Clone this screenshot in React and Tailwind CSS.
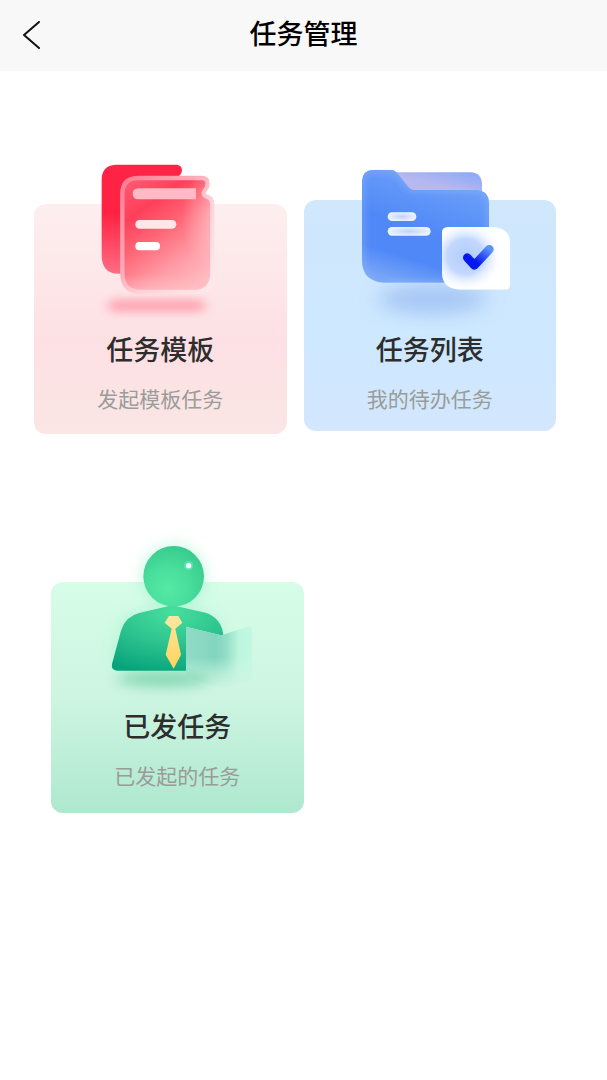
import React from "react";

function TemplateIcon() {
  return (
    <svg viewBox="0 0 450 540" className="block h-[180px] w-[150px]" aria-hidden="true">
      <defs>
        <linearGradient id="tplBack" x1="0" y1="0" x2="0" y2="1">
          <stop offset="0" stopColor="#ff2346" />
          <stop offset="0.45" stopColor="#ff2343" />
          <stop offset="1" stopColor="#ff6d85" />
        </linearGradient>
        <linearGradient id="tplFront" x1="0.2" y1="0" x2="0.75" y2="1">
          <stop offset="0" stopColor="#ff5570" />
          <stop offset="0.22" stopColor="#ff3f5a" />
          <stop offset="0.45" stopColor="#ff6475" />
          <stop offset="0.75" stopColor="#ff9ca6" />
          <stop offset="1" stopColor="#ffbdc3" />
        </linearGradient>
        <linearGradient id="tplEdge" x1="0" y1="0" x2="1" y2="1">
          <stop offset="0" stopColor="#ff7c92" />
          <stop offset="0.4" stopColor="#ffabb8" />
          <stop offset="0.6" stopColor="#ffd3d9" />
          <stop offset="1" stopColor="#ffeaec" />
        </linearGradient>
        <radialGradient id="tplFade">
          <stop offset="0" stopColor="#ffc3c8" stopOpacity="0.9" />
          <stop offset="1" stopColor="#ffc3c8" stopOpacity="0" />
        </radialGradient>
        <filter id="tplBlur" x="-30%" y="-150%" width="160%" height="400%">
          <feGaussianBlur stdDeviation="18 13" />
        </filter>
        <clipPath id="tplClip">
          <path d="M160 84H350Q368 84 368 102Q368 112 359 122Q352 132 362 139Q382 142 382 164V368Q382 426 326 426H170Q112 426 112 368V132Q112 84 160 84Z" />
        </clipPath>
      </defs>
      <rect x="70" y="448" width="290" height="38" rx="19" fill="#ff9bab" opacity="0.85" filter="url(#tplBlur)" />
      <path d="M92 44H276Q291 46 291 62Q288 76 276 82V371H100Q50 371 50 314V90Q50 46 92 44Z" fill="url(#tplBack)" />
      <path d="M160 84H350Q368 84 368 102Q368 112 359 122Q352 132 362 139Q382 142 382 164V368Q382 426 326 426H170Q112 426 112 368V132Q112 84 160 84Z" fill="url(#tplFront)" />
      <g clipPath="url(#tplClip)">
        <ellipse cx="410" cy="210" rx="120" ry="180" fill="url(#tplFade)" />
        <ellipse cx="200" cy="465" rx="220" ry="95" fill="url(#tplFade)" />
      </g>
      <path d="M160 84H350Q368 84 368 102Q368 112 359 122Q352 132 362 139Q382 142 382 164V368Q382 426 326 426H170Q112 426 112 368V132Q112 84 160 84Z" fill="none" stroke="url(#tplEdge)" strokeWidth="13" />
      <path d="M160 115H333V148H160Q143 147 143 131Q143 116 160 115Z" fill="#ffbac6" />
      <rect x="151" y="210" width="123" height="26" rx="13" fill="#ffe6e9" />
      <rect x="151" y="276" width="74" height="25" rx="12" fill="#fff" />
    </svg>
  );
}

function FolderIcon() {
  return (
    <svg viewBox="-30 -15 570 540" className="block h-[180px] w-[190px]" aria-hidden="true">
      <defs>
        <linearGradient id="folderBody" x1="0.7" y1="0" x2="0.35" y2="1">
          <stop offset="0" stopColor="#72a4fa" />
          <stop offset="0.55" stopColor="#5089f7" />
          <stop offset="0.8" stopColor="#5089f7" />
          <stop offset="1" stopColor="#76a3f8" />
        </linearGradient>
        <linearGradient id="folderBack" x1="0" y1="1" x2="1" y2="0">
          <stop offset="0" stopColor="#c4bdec" />
          <stop offset="0.5" stopColor="#b3b7f2" />
          <stop offset="1" stopColor="#86a8f5" />
        </linearGradient>
        <linearGradient id="folderTick" x1="0" y1="1" x2="1" y2="0">
          <stop offset="0.3" stopColor="#0517ec" />
          <stop offset="1" stopColor="#5b93fa" />
        </linearGradient>
        <radialGradient id="folderLine">
          <stop offset="0" stopColor="#bdd3fc" />
          <stop offset="1" stopColor="#eaf3ff" />
        </radialGradient>
        <radialGradient id="folderGlass">
          <stop offset="0" stopColor="#b3ccfd" />
          <stop offset="0.5" stopColor="#c3d8fe" />
          <stop offset="1" stopColor="#fff" stopOpacity="0" />
        </radialGradient>
        <filter id="folderBlur" x="-40%" y="-150%" width="180%" height="400%">
          <feGaussianBlur stdDeviation="28" />
        </filter>
        <filter id="folderEdgeBlur" x="-20%" y="-20%" width="140%" height="140%">
          <feGaussianBlur stdDeviation="10" />
        </filter>
        <clipPath id="folderClip">
          <path d="M82 44H135Q150 44 159 57L188 94Q196 105 208 105H395Q432 108 432 145V383H112Q51 376 51 315V77Q53 46 82 44Z" />
        </clipPath>
        <clipPath id="folderNote">
          <path d="M308 216H448Q496 222 496 265V388Q496 404 480 404H342Q292 400 291 354V232Q291 217 308 216Z" />
        </clipPath>
      </defs>
      <ellipse cx="262" cy="432" rx="165" ry="44" fill="#9bbdf3" opacity="0.8" filter="url(#folderBlur)" />
      <path d="M140 52H377Q410 54 411 88V120H180Z" fill="url(#folderBack)" />
      <g clipPath="url(#folderClip)">
        <rect x="50" y="40" width="384" height="345" fill="url(#folderBody)" />
        <path d="M82 44H135Q150 44 159 57L188 94Q196 105 208 105H395Q432 108 432 145V383H112Q51 376 51 315V77Q53 46 82 44Z" fill="none" stroke="#93b9fb" strokeWidth="14" opacity="0.5" filter="url(#folderEdgeBlur)" />
      </g>
      <rect x="128" y="172" width="86" height="26" rx="13" fill="url(#folderLine)" />
      <rect x="128" y="216" width="129" height="26" rx="13" fill="url(#folderLine)" />
      <g clipPath="url(#folderNote)">
        <rect x="290" y="215" width="208" height="190" fill="#fff" />
        <ellipse cx="362" cy="304" rx="112" ry="106" fill="url(#folderGlass)" />
      </g>
      <path d="M367 308L388 331L433 283" fill="none" stroke="url(#folderTick)" strokeWidth="26" strokeLinecap="round" strokeLinejoin="round" />
    </svg>
  );
}

function PersonIcon() {
  return (
    <svg viewBox="-24 -9 540 540" className="block size-[180px]" aria-hidden="true">
      <defs>
        <radialGradient id="personHead" cx="0.4" cy="0.7" r="0.75">
          <stop offset="0" stopColor="#54eaa5" />
          <stop offset="0.5" stopColor="#48dd9b" />
          <stop offset="1" stopColor="#36c98d" />
        </radialGradient>
        <radialGradient id="personBody" cx="0.55" cy="0.1" r="0.95">
          <stop offset="0" stopColor="#45df9e" />
          <stop offset="0.5" stopColor="#2fc48f" />
          <stop offset="1" stopColor="#07a47c" />
        </radialGradient>
        <linearGradient id="personTie" x1="0" y1="0" x2="0" y2="1">
          <stop offset="0" stopColor="#fbe6a3" />
          <stop offset="1" stopColor="#ffd45c" />
        </linearGradient>
        <linearGradient id="personBook" x1="0" y1="0" x2="1" y2="0">
          <stop offset="0" stopColor="#90dcc6" />
          <stop offset="0.45" stopColor="#83d5bf" />
          <stop offset="0.6" stopColor="#93ddc7" />
          <stop offset="0.78" stopColor="#bcf5de" />
          <stop offset="1" stopColor="#c3f8e1" />
        </linearGradient>
        <linearGradient id="personBookFade" x1="0" y1="0" x2="0" y2="1">
          <stop offset="0.5" stopColor="#fff" />
          <stop offset="0.72" stopColor="#fff" stopOpacity="0.4" />
          <stop offset="0.95" stopColor="#fff" stopOpacity="0" />
        </linearGradient>
        <filter id="personBlur" x="-50%" y="-150%" width="200%" height="400%">
          <feGaussianBlur stdDeviation="19" />
        </filter>
        <mask id="personBookMask">
          <rect x="260" y="280" width="220" height="205" fill="url(#personBookFade)" />
        </mask>
        <clipPath id="personBookClip">
          <path d="M273 290L378 316L460 290Q471 288 471 299V450L385 480L273 440Z" />
        </clipPath>
      </defs>
      <circle cx="236" cy="140" r="100" fill="#8ff0c4" opacity="0.4" filter="url(#personBlur)" />
      <path d="M75 280Q110 235 230 228Q370 230 385 310V400H50Z" fill="#8ff0c4" opacity="0.4" filter="url(#personBlur)" />
      <ellipse cx="205" cy="446" rx="140" ry="24" fill="#63c99e" opacity="0.7" filter="url(#personBlur)" />
      {/* right side is cut off where the glass book starts */}
      <path d="M232 226L332 248Q380 264 385 316L378 316L273 290V422H66Q48 420 51 402L78 302Q90 260 132 249Z" fill="url(#personBody)" />
      <circle cx="236" cy="139" r="91" fill="url(#personHead)" />
      <circle cx="281" cy="107" r="14" fill="#7dffe0" opacity="0.35" />
      <circle cx="281" cy="107" r="8" fill="#fff" />
      <path d="M222 258H250L262 278L241 296L258 374L236 416L212 374L230 296L209 278Z" fill="url(#personTie)" />
      <g clipPath="url(#personBookClip)">
        <rect x="270" y="285" width="205" height="200" fill="url(#personBook)" mask="url(#personBookMask)" />
      </g>
    </svg>
  );
}

function TaskCard({ title, desc, icon, className }) {
  return (
    <a href="#" className={`flex flex-col items-center rounded-xl ${className}`}>
      {icon}
      <h2 className="text-[27px] leading-[38px] font-medium text-[#2d2d2d]">{title}</h2>
      <p className="mt-[15px] text-[21px] leading-[30px] text-[#999c99]">{desc}</p>
    </a>
  );
}

export default function App() {
  return (
    <div className="min-h-screen bg-white font-['Noto_Sans_CJK_SC',sans-serif]">
      <header className="flex h-[71px] items-center bg-[#f8f8f8] px-4 pb-1.5">
        <button type="button" aria-label="返回" className="flex size-8 items-center justify-center">
          <svg viewBox="0 0 32 32" className="size-8" fill="none" stroke="#111" strokeWidth="2" strokeLinecap="round" strokeLinejoin="round">
            <path d="M23 5L8 18L23 31" />
          </svg>
        </button>
        <h1 className="flex-1 text-center text-[27px] leading-10 font-medium text-black">任务管理</h1>
        <div className="w-8" />
      </header>

      <main className="pt-[129px] pb-16">
        <div className="grid grid-cols-2 items-start gap-[17px] pr-[51px] pl-[34px]">
          <TaskCard
            title="任务模板"
            desc="发起模板任务"
            icon={<div className="-mt-[54px]"><TemplateIcon /></div>}
            className="mt-1 bg-linear-to-b from-[#fdefef] via-[#fde0e4] via-60% to-[#fae6e4] pb-[21px]"
          />
          <TaskCard
            title="任务列表"
            desc="我的待办任务"
            icon={<div className="-mt-[50px]"><FolderIcon /></div>}
            className="bg-linear-to-b from-[#d0e7fc] via-[#cde8ff] via-60% to-[#d3e7fd] pb-[18px]"
          />
        </div>
        <div className="mt-[148px] grid grid-cols-2 items-start gap-[17px] pr-[34px] pl-[51px]">
          <TaskCard
            title="已发任务"
            desc="已发起的任务"
            icon={<div className="-mt-[55px]"><PersonIcon /></div>}
            className="bg-linear-to-b from-[#d5fde7] via-[#cdf5e2] via-50% to-[#aee8cf] pb-[23px]"
          />
        </div>
      </main>
    </div>
  );
}
